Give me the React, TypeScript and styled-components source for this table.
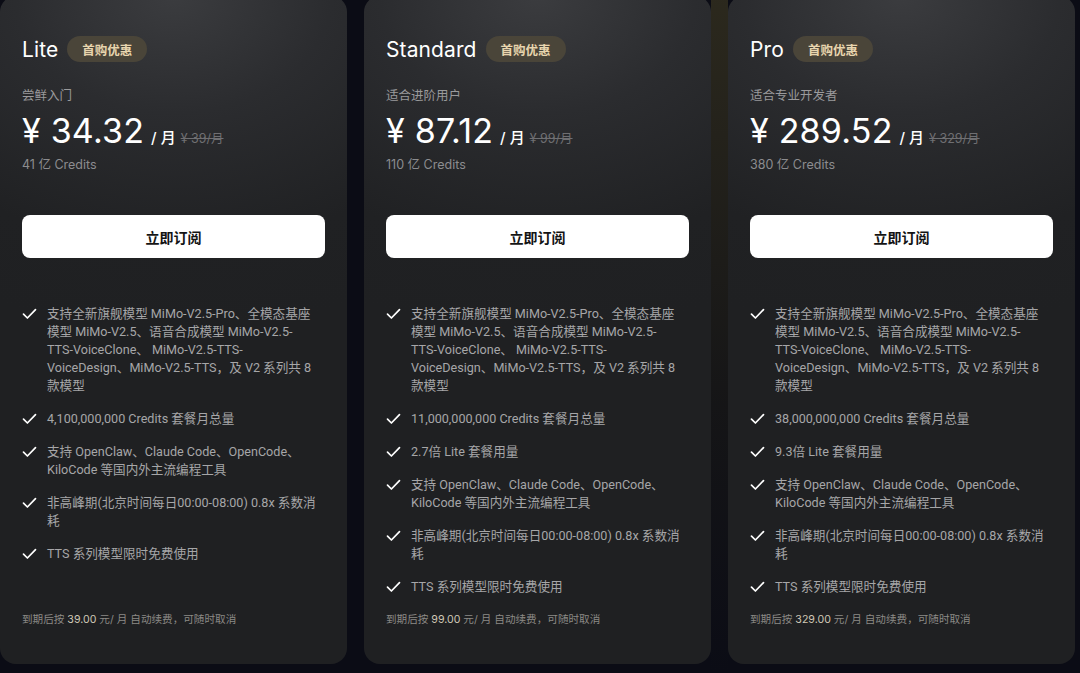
import React from "react";
import styled, { createGlobalStyle } from "styled-components";

const GlobalStyle = createGlobalStyle`
  html, body {
    margin: 0;
    padding: 0;
    background:
      linear-gradient(to bottom, rgba(70, 64, 36, 0.55), rgba(40, 38, 26, 0.35) 60%, rgba(20, 20, 24, 0) 100%) no-repeat 711px 0 / 17px 100%,
      #0b0c15;
    font-family: "Inter", "Noto Sans CJK SC", sans-serif;
    -webkit-font-smoothing: antialiased;
  }
  #root { height: 673px; overflow: hidden; }
`;

const Page = styled.div`
  display: grid;
  grid-template-columns: repeat(3, 347px);
  column-gap: 17px;
  margin-top: -4px;
  height: 668px;
`;

const Card = styled.section`
  display: flex;
  flex-direction: column;
  padding: 40px 22px 36px;
  border-radius: 16px;
  background:
    radial-gradient(130% 50% at 50% 0%, #3b3c3f 0%, #2b2c2f 35%, #202123 75%, #1f2022 100%);
  box-sizing: border-box;
  min-width: 0;
`;

const Header = styled.div`
  display: flex;
  align-items: center;
  gap: 9px;
  height: 26px;
`;

const Title = styled.h2`
  margin: 0;
  font-size: 21px;
  font-weight: 400;
  color: #ffffff;
  letter-spacing: 0.1px;
`;

const Badge = styled.span`
  display: inline-flex;
  align-items: center;
  height: 26px;
  padding: 0 15px;
  border-radius: 13px;
  background: #4a4539;
  color: #e8d5ae;
  font-size: 12.5px;
  font-weight: 600;
  font-family: "Noto Sans CJK SC", sans-serif;
`;

const Subtitle = styled.div`
  margin-top: 23px;
  font-size: 12.5px;
  line-height: 20px;
  color: #9a9a9c;
  font-family: "Noto Sans CJK SC", sans-serif;
`;

const PriceRow = styled.div`
  display: flex;
  align-items: baseline;
  margin-top: 4px;
  height: 44px;
`;

const Price = styled.span`
  font-size: 34px;
  font-weight: 400;
  color: #ffffff;
  line-height: 44px;
  letter-spacing: 0.2px;
`;

const Per = styled.span`
  margin-left: 7px;
  font-size: 15px;
  font-weight: 500;
  color: #ffffff;
  font-family: "Inter", "Noto Sans CJK SC", sans-serif;
`;

const OldPrice = styled.span`
  margin-left: 5px;
  font-size: 12.5px;
  color: #6f6f72;
  text-decoration: line-through;
  font-family: "Inter", "Noto Sans CJK SC", sans-serif;
`;

const Credits = styled.div`
  margin-top: 2px;
  font-size: 12.5px;
  line-height: 20px;
  color: #8c8c8f;
`;

const Subscribe = styled.button`
  margin-top: 40px;
  height: 43px;
  width: 100%;
  border: none;
  border-radius: 8px;
  background: #ffffff;
  color: #141414;
  font-size: 14px;
  font-weight: 700;
  font-family: "Noto Sans CJK SC", sans-serif;
  cursor: pointer;
`;

const Features = styled.ul`
  list-style: none;
  margin: 47px 0 0;
  padding: 0 8px 0 0;
  display: flex;
  flex-direction: column;
  gap: 15px;
`;

const Feature = styled.li`
  display: flex;
  align-items: flex-start;
  gap: 10px;
`;

const CheckWrap = styled.span`
  flex: none;
  width: 15px;
  height: 18px;
  display: flex;
  align-items: center;
  color: #ffffff;
`;

const FeatureText = styled.span`
  font-size: 12.6px;
  line-height: 18px;
  color: #a6a6a8;
  font-family: "Roboto", "Noto Sans CJK SC", sans-serif;
`;

const Footer = styled.div`
  margin-top: auto;
  font-size: 10.6px;
  line-height: 16px;
  color: #8c8a86;
  font-family: "Inter", "Noto Sans CJK SC", sans-serif;
`;

const FooterNum = styled.span`
  color: #cfc8b6;
`;

const Check = () => (
  <svg width="15" height="12" viewBox="0 0 15 12" fill="none">
    <path d="M1.5 6.2 L5.4 10 L13.5 1.6" stroke="currentColor" strokeWidth="1.7" strokeLinecap="round" strokeLinejoin="round" />
  </svg>
);

type Plan = {
  name: string;
  subtitle: string;
  price: string;
  old: string;
  credits: string;
  features: string[];
  renew: string;
};

const common1 =
  "支持全新旗舰模型 MiMo-V2.5-Pro、全模态基座模型 MiMo-V2.5、语音合成模型 MiMo-V2.5-TTS-VoiceClone、 MiMo-V2.5-TTS-VoiceDesign、MiMo-V2.5-TTS，及 V2 系列共 8 款模型";
const tools = "支持 OpenClaw、Claude Code、OpenCode、KiloCode 等国内外主流编程工具";
const offpeak = "非高峰期(北京时间每日00:00-08:00) 0.8x 系数消耗";
const tts = "TTS 系列模型限时免费使用";

const plans: Plan[] = [
  {
    name: "Lite",
    subtitle: "尝鲜入门",
    price: "¥ 34.32",
    old: "¥ 39/月",
    credits: "41 亿 Credits",
    features: [common1, "4,100,000,000 Credits 套餐月总量", tools, offpeak, tts],
    renew: "39.00",
  },
  {
    name: "Standard",
    subtitle: "适合进阶用户",
    price: "¥ 87.12",
    old: "¥ 99/月",
    credits: "110 亿 Credits",
    features: [common1, "11,000,000,000 Credits 套餐月总量", "2.7倍 Lite 套餐用量", tools, offpeak, tts],
    renew: "99.00",
  },
  {
    name: "Pro",
    subtitle: "适合专业开发者",
    price: "¥ 289.52",
    old: "¥ 329/月",
    credits: "380 亿 Credits",
    features: [common1, "38,000,000,000 Credits 套餐月总量", "9.3倍 Lite 套餐用量", tools, offpeak, tts],
    renew: "329.00",
  },
];

export default function App() {
  return (
    <>
      <GlobalStyle />
      <Page>
        {plans.map((p) => (
          <Card key={p.name}>
            <Header>
              <Title>{p.name}</Title>
              <Badge>首购优惠</Badge>
            </Header>
            <Subtitle>{p.subtitle}</Subtitle>
            <PriceRow>
              <Price>{p.price}</Price>
              <Per>/ 月</Per>
              <OldPrice>{p.old}</OldPrice>
            </PriceRow>
            <Credits>{p.credits}</Credits>
            <Subscribe>立即订阅</Subscribe>
            <Features>
              {p.features.map((f, i) => (
                <Feature key={i}>
                  <CheckWrap>
                    <Check />
                  </CheckWrap>
                  <FeatureText>{f}</FeatureText>
                </Feature>
              ))}
            </Features>
            <Footer>
              到期后按 <FooterNum>{p.renew}</FooterNum> 元/ 月 自动续费，可随时取消
            </Footer>
          </Card>
        ))}
      </Page>
    </>
  );
}
